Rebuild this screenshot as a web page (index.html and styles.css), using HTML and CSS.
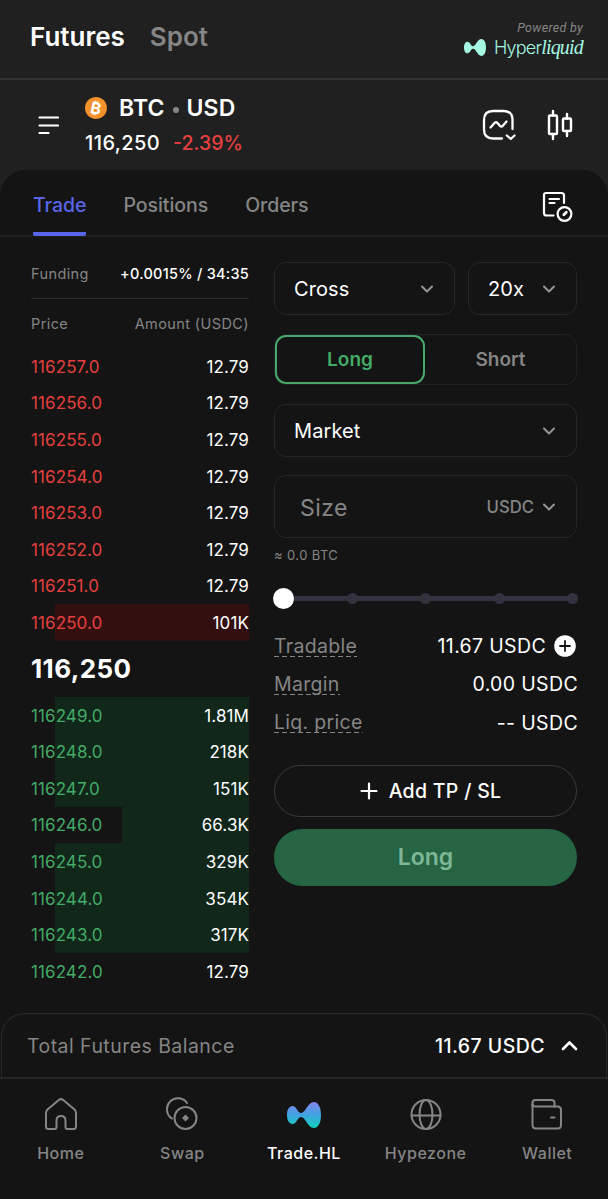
FILE: index.html
```html
<!DOCTYPE html>
<html lang="en">
<head>
    <meta charset="UTF-8">
    <meta name="viewport" content="width=device-width, initial-scale=1.0">
    <title>Futures - BTC / USD</title>
    <link rel="stylesheet" href="styles.css">
</head>
<body>
    <header class="top-bar">
        <div class="market-tabs">
            <a class="active">Futures</a>
            <a>Spot</a>
        </div>
        <div class="powered">
            <span class="powered-text">Powered by</span>
            <div class="brand">
                <svg class="brand-icon" width="22" height="17" viewBox="0 0 34 26"><path d="M0 13C0 7.500 2.200 4 5.500 4C9.800 4 10 10.500 14 11C18.500 11.300 20.500 0 27 0C31.300 0 34 5.500 34 13C34 20.500 31.300 26 27 26C20.500 26 18.500 14.700 14 15C10 15.500 9.800 22 5.500 22C2.200 22 0 18.500 0 13Z" fill="#a5f8e2"/></svg>
                <span class="brand-name">Hyper<i>liquid</i></span>
            </div>
        </div>
    </header>

    <section class="pair-bar">
        <svg class="menu-icon" width="22" height="20" viewBox="0 0 22 20"><path d="M2.500 2.500H21M2.500 10.500H21M2.500 18H11.500" fill="none" stroke="#fff" stroke-width="2.200" stroke-linecap="round"/></svg>
        <div class="pair-info">
            <div class="pair-name">
                <span class="btc-icon">₿</span>
                <span>BTC</span>
                <span class="dot"></span>
                <span>USD</span>
            </div>
            <div class="pair-price">
                <span>116,250</span>
                <span class="change">-2.39%</span>
            </div>
        </div>
        <div class="pair-actions">
            <svg width="34" height="32" viewBox="0 0 34 32" fill="none" stroke="#fff" stroke-width="2.300" stroke-linecap="round" stroke-linejoin="round"><path d="M20 29.500H11Q2 29.500 2 20.500V11Q2 2 11 2H21.500Q30.500 2 30.500 11V20"/><path d="M8.500 18.500L12.500 14Q14 12.500 15.500 14L18 17Q19.500 18.500 20.800 16.800L24.500 12.500"/><path d="M24.800 26.500L28.800 30L32.500 26.500"/></svg>
            <svg width="26" height="32" viewBox="0 0 26 32" fill="none" stroke="#fff" stroke-width="2.400" stroke-linecap="round"><rect x="2" y="6.500" width="8" height="18.500" rx="1"/><path d="M6 2V6.500M6 25V30M20 5V9.500M20 22V27"/><rect x="16" y="9.500" width="8" height="12.500" rx="1"/></svg>
        </div>
    </section>

    <main class="panel">
        <nav class="panel-tabs">
            <a class="active">Trade</a>
            <a>Positions</a>
            <a>Orders</a>
            <svg class="history-icon" width="32" height="32" viewBox="0 0 32 32" fill="none" stroke="#fff" stroke-width="2.200" stroke-linecap="round"><path d="M12.500 24.500H5.500Q3 24.500 3 22V4Q3 2 5 2H20.500Q23 2 23 4.500V12"/><path d="M8.500 8H18M8.500 12H13.500"/><circle cx="23.500" cy="23" r="6.900"/><path d="M22.800 23.700L25.300 21.200" stroke-width="2.800"/></svg>
        </nav>

        <div class="trade">
            <section class="book">
                <div class="funding">
                    <span>Funding</span>
                    <span class="funding-value">+0.0015% / 34:35</span>
                </div>
                <div class="book-head">
                    <span>Price</span>
                    <span>Amount (USDC)</span>
                </div>
                <div class="rows asks">
                    <div class="row"><span>116257.0</span><b>12.79</b></div>
                    <div class="row"><span>116256.0</span><b>12.79</b></div>
                    <div class="row"><span>116255.0</span><b>12.79</b></div>
                    <div class="row"><span>116254.0</span><b>12.79</b></div>
                    <div class="row"><span>116253.0</span><b>12.79</b></div>
                    <div class="row"><span>116252.0</span><b>12.79</b></div>
                    <div class="row"><span>116251.0</span><b>12.79</b></div>
                    <div class="row" style="--depth: 89.2%"><span>116250.0</span><b>101K</b></div>
                </div>
                <div class="last-price">116,250</div>
                <div class="rows bids">
                    <div class="row" style="--depth: 89.2%"><span>116249.0</span><b>1.81M</b></div>
                    <div class="row" style="--depth: 89.2%"><span>116248.0</span><b>218K</b></div>
                    <div class="row" style="--depth: 89.2%"><span>116247.0</span><b>151K</b></div>
                    <div class="row" style="--depth: 58.3%"><span>116246.0</span><b>66.3K</b></div>
                    <div class="row" style="--depth: 89.2%"><span>116245.0</span><b>329K</b></div>
                    <div class="row" style="--depth: 89.2%"><span>116244.0</span><b>354K</b></div>
                    <div class="row" style="--depth: 89.2%"><span>116243.0</span><b>317K</b></div>
                    <div class="row"><span>116242.0</span><b>12.79</b></div>
                </div>
            </section>

            <section class="order-form">
                <div class="selects">
                    <div class="select mode"><span>Cross</span><svg class="chevron" viewBox="0 0 14 8"><path d="M2 1.500L7 6.500L12 1.500"/></svg></div>
                    <div class="select leverage"><span>20x</span><svg class="chevron" viewBox="0 0 14 8"><path d="M2 1.500L7 6.500L12 1.500"/></svg></div>
                </div>
                <div class="side-toggle">
                    <div class="side active">Long</div>
                    <div class="side">Short</div>
                </div>
                <div class="select type"><span>Market</span><svg class="chevron" viewBox="0 0 14 8"><path d="M2 1.500L7 6.500L12 1.500"/></svg></div>
                <div class="size-box">
                    <span class="size-label">Size</span>
                    <span class="size-unit">USDC</span>
                    <svg class="chevron" viewBox="0 0 14 8"><path d="M2 1.500L7 6.500L12 1.500"/></svg>
                </div>
                <div class="approx">≈ 0.0 BTC</div>
                <div class="slider">
                    <span class="thumb"></span>
                    <span class="stop"></span>
                    <span class="stop"></span>
                    <span class="stop"></span>
                    <span class="stop"></span>
                </div>
                <div class="details">
                    <div class="detail">
                        <span class="detail-label">Tradable</span>
                        <span class="detail-value">11.67 USDC</span>
                        <svg class="plus-circle" width="22" height="22" viewBox="0 0 22 22"><circle cx="11" cy="11" r="10.800" fill="#fff"/><path d="M6 11H16M11 6V16" stroke="#141414" stroke-width="1.800" stroke-linecap="round"/></svg>
                    </div>
                    <div class="detail">
                        <span class="detail-label">Margin</span>
                        <span class="detail-value">0.00 USDC</span>
                    </div>
                    <div class="detail">
                        <span class="detail-label">Liq. price</span>
                        <span class="detail-value">-- USDC</span>
                    </div>
                </div>
                <div class="add-btn">
                    <svg width="18" height="18" viewBox="0 0 18 18"><path d="M1.500 9H16.500M9 1.500V16.500" stroke="#fff" stroke-width="2.200" stroke-linecap="round"/></svg>
                    <span>Add TP / SL</span>
                </div>
                <div class="submit-btn">Long</div>
            </section>
        </div>
    </main>

    <section class="balance">
        <span class="balance-label">Total Futures Balance</span>
        <span class="balance-value">11.67 USDC</span>
        <svg width="17" height="11" viewBox="0 0 17 11"><path d="M2 9L8.500 2.500L15 9" fill="none" stroke="#fff" stroke-width="2.600" stroke-linecap="round" stroke-linejoin="round"/></svg>
    </section>

    <footer class="bottom-nav">
        <a>
            <svg width="34" height="34" viewBox="0 0 34 34"><path d="M3.500 12.500L14.800 3Q17 1.200 19.200 3L30.500 12.500Q32 14 32 16V29.500Q32 32 29.500 32H23.500Q21.500 32 21.500 30V23.500Q21.500 19 17 19Q12.500 19 12.500 23.500V30Q12.500 32 10.500 32H4.500Q2 32 2 29.500V16Q2 14 3.500 12.500Z"/></svg>
            <span>Home</span>
        </a>
        <a>
            <svg width="34" height="34" viewBox="0 0 34 34"><path d="M22 6A11 11 0 1 0 7 21.500"/><circle cx="20.500" cy="21" r="11"/><path d="M20.500 17.500L24 21L20.500 24.500L17 21Z" fill="#858585" stroke="none"/></svg>
            <span>Swap</span>
        </a>
        <a class="active">
            <svg width="34" height="34" viewBox="0 0 34 34">
                <defs>
                    <linearGradient id="hl" x1="0" y1="0" x2="0" y2="1">
                        <stop offset="0" stop-color="#8584f0"/>
                        <stop offset="0.5" stop-color="#3fa2e0"/>
                        <stop offset="1" stop-color="#10d4bb"/>
                    </linearGradient>
                </defs>
                <path transform="translate(0 5)" d="M0 13C0 7.500 2.200 4 5.500 4C9.800 4 10 10.500 14 11C18.500 11.300 20.500 0 27 0C31.300 0 34 5.500 34 13C34 20.500 31.300 26 27 26C20.500 26 18.500 14.700 14 15C10 15.500 9.800 22 5.500 22C2.200 22 0 18.500 0 13Z" fill="url(#hl)" stroke="none"/>
            </svg>
            <span>Trade.HL</span>
        </a>
        <a>
            <svg width="34" height="34" viewBox="0 0 34 34"><circle cx="17" cy="17.500" r="14.500"/><ellipse cx="17" cy="17.500" rx="6.500" ry="14.500"/><path d="M2.500 18.500H31.500"/></svg>
            <span>Hypezone</span>
        </a>
        <a>
            <svg width="34" height="34" viewBox="0 0 34 34"><path d="M2.500 9.500V6Q2.500 3 5.500 3H21.500Q24.500 3 24.500 6V9.500"/><path d="M2.500 7V28Q2.500 31.500 6 31.500H27.500Q31 31.500 31 28V13Q31 9.500 27.500 9.500H5.500Q2.500 9.500 2.500 7M21 20.500H24.500"/></svg>
            <span>Wallet</span>
        </a>
    </footer>
</body>
</html>
```
FILE: styles.css
```css
* {
    box-sizing: border-box;
}

body {
    margin: 0;
    width: 608px;
    height: 1199px;
    overflow: hidden;
    display: flex;
    flex-direction: column;
    background-color: #202020;
    color: #fff;
    font-family: Inter, "Liberation Sans", sans-serif;
}

svg {
    display: block;
    flex-shrink: 0;
}

/* Header */
.top-bar {
    height: 80px;
    padding: 0 25px 6px 30px;
    display: flex;
    justify-content: space-between;
    align-items: center;
    border-bottom: 2px solid #333;
}

.market-tabs {
    display: flex;
    gap: 25px;
    font-size: 26px;
    font-weight: 600;
    color: #858585;
}

.market-tabs .active {
    color: #fff;
}

.powered {
    padding-top: 7px;
    display: flex;
    flex-direction: column;
    align-items: flex-end;
}

.powered-text {
    font-family: Roboto, sans-serif;
    font-size: 12.5px;
    line-height: 16px;
    font-style: italic;
    letter-spacing: 0.3px;
    color: #858585;
}

.brand {
    display: flex;
    align-items: center;
    gap: 8px;
    color: #a5f8e2;
}

.brand-name {
    font-size: 18px;
    line-height: 22px;
    font-weight: 300;
    letter-spacing: -0.8px;
}

.brand-name i {
    font-family: "Liberation Serif", serif;
    font-size: 20px;
    font-weight: 400;
}

/* Pair */
.pair-bar {
    height: 90px;
    padding: 0 35px 0 37px;
    display: flex;
    align-items: center;
}

.pair-info {
    flex: 1;
    margin-left: 26px;
}

.pair-name {
    display: flex;
    align-items: center;
    height: 34px;
    font-size: 23px;
    font-weight: 600;
    letter-spacing: 0.1px;
}

.btc-icon {
    width: 22px;
    height: 22px;
    margin-right: 12px;
    border-radius: 50%;
    background-color: #f3922b;
    font-size: 16px;
    font-weight: 700;
    line-height: 22px;
    text-align: center;
    transform: rotate(12deg);
}

.dot {
    width: 6px;
    height: 6px;
    margin: 4px 8px 0;
    border-radius: 50%;
    background-color: #858585;
}

.pair-price {
    display: flex;
    gap: 13px;
    height: 34px;
    line-height: 36px;
    font-size: 20px;
    font-weight: 500;
    letter-spacing: 0.4px;
}

.change {
    font-size: 19.5px;
    color: #e5403f;
    letter-spacing: 0;
}

.pair-actions {
    display: flex;
    gap: 31px;
}

/* Trade panel */
.panel {
    height: 843px;
    background-color: #141414;
    border-radius: 26px 26px 0 0;
}

.panel-tabs {
    height: 67px;
    padding: 0 35px 0 33px;
    display: flex;
    align-items: center;
    gap: 37px;
    border-bottom: 2px solid #1f1f1f;
    font-size: 19.5px;
    font-weight: 500;
    letter-spacing: -0.05px;
    color: #858585;
}

.panel-tabs a {
    height: 66px;
    padding-top: 4px;
    line-height: 62px;
}

.panel-tabs .active {
    color: #5865e8;
    background: linear-gradient(#5865e8, #5865e8) bottom / 100% 4px no-repeat;
    border-radius: 2px;
}

.history-icon {
    margin: 8px 0 0 auto;
}

.trade {
    display: flex;
    gap: 25px;
    padding: 25px 31px 0;
}

/* Order book */
.book {
    width: 218px;
}

.funding,
.book-head,
.row {
    display: flex;
    justify-content: space-between;
    align-items: center;
}

.funding {
    height: 37px;
    padding-bottom: 13px;
    border-bottom: 1px solid #2a2a2a;
    font-size: 14.5px;
    letter-spacing: 0.4px;
    color: #858585;
}

.funding-value {
    color: #fff;
    font-weight: 450;
    letter-spacing: 0.25px;
}

.book-head {
    height: 49px;
    padding-bottom: 1px;
    font-size: 14.5px;
    letter-spacing: 0.4px;
    color: #858585;
}

.row {
    height: 36.6px;
    padding-top: 1px;
    font-size: 17px;
    letter-spacing: 0.1px;
    background: linear-gradient(var(--fill), var(--fill)) right / var(--depth, 0%) 100% no-repeat;
}

.row b {
    font-weight: 400;
    color: #fff;
}

.asks {
    --fill: #330f10;
    color: #e5403f;
}

.bids {
    --fill: #10271a;
    color: #43ab67;
}

.last-price {
    height: 56px;
    line-height: 56px;
    font-size: 26px;
    font-weight: 700;
    letter-spacing: 0.4px;
}

/* Order form */
.order-form {
    width: 303px;
}

.selects {
    display: flex;
    gap: 13px;
}

.select {
    height: 53px;
    padding: 0 20px 0 19px;
    display: flex;
    justify-content: space-between;
    align-items: center;
    border: 1px solid #262626;
    border-radius: 12px;
    font-size: 20px;
    letter-spacing: 0.1px;
}

.mode {
    width: 181px;
}

.leverage {
    width: 109px;
}

.chevron {
    width: 14px;
    height: 8px;
    fill: none;
    stroke: #959595;
    stroke-width: 2;
    stroke-linecap: round;
    stroke-linejoin: round;
}

.side-toggle {
    height: 51px;
    margin-top: 19px;
    display: flex;
    border: 1px solid #232323;
    border-radius: 12px;
}

.side {
    flex: 1;
    display: flex;
    justify-content: center;
    align-items: center;
    padding-bottom: 1px;
    font-size: 19px;
    font-weight: 600;
    color: #858585;
}

.side.active {
    flex: 0 0 150px;
    color: #43ab67;
    border: 2px solid #48a76b;
    border-radius: 11px;
}

.type {
    margin-top: 19px;
}

.size-box {
    height: 63px;
    margin-top: 18px;
    padding: 0 20px 0 25px;
    display: flex;
    align-items: center;
    border: 1px solid #262626;
    border-radius: 12px;
    color: #858585;
}

.size-label {
    flex: 1;
    padding-top: 2px;
    font-size: 23px;
    letter-spacing: 0.4px;
}

.size-unit {
    margin-right: 8px;
    font-size: 16.7px;
    font-weight: 500;
}

.approx {
    height: 34px;
    line-height: 34px;
    font-size: 13px;
    letter-spacing: 0.4px;
    color: #858585;
}

.slider {
    height: 22px;
    margin: 15px -1px 0 -1px;
    display: flex;
    justify-content: space-between;
    align-items: center;
    background: linear-gradient(#34323f, #34323f) center / 290px 5px no-repeat;
}

.thumb {
    width: 21px;
    height: 21px;
    margin-right: -10px;
    border-radius: 50%;
    background-color: #fff;
}

.stop {
    width: 11px;
    height: 11px;
    border-radius: 50%;
    background-color: #34323f;
}

.details {
    margin-top: 18px;
}

.detail {
    height: 38.3px;
    display: flex;
    align-items: center;
    font-size: 19.5px;
    letter-spacing: 0.3px;
}

.detail-label {
    line-height: 21px;
    color: #858585;
    background: repeating-linear-gradient(to right, #858585 0 5px, transparent 5px 8px) bottom / 100% 1px no-repeat;
}

.detail-value {
    margin-left: auto;
    margin-right: -1px;
    letter-spacing: 0.35px;
}

.plus-circle {
    margin: 0 1px 0 9px;
}

.add-btn {
    height: 52px;
    margin-top: 23px;
    padding-left: 10px;
    display: flex;
    justify-content: center;
    align-items: center;
    gap: 11px;
    border: 1px solid #3a3a3a;
    border-radius: 26px;
    font-size: 19.5px;
    font-weight: 500;
    letter-spacing: 0.3px;
}

.submit-btn {
    height: 57px;
    margin-top: 12px;
    line-height: 56px;
    text-align: center;
    border-radius: 29px;
    background-color: #266543;
    color: #7eb797;
    font-size: 23px;
    font-weight: 600;
}

/* Balance */
.balance {
    height: 64px;
    margin: 0 1px;
    padding: 0 28px 0 25px;
    display: flex;
    align-items: center;
    background-color: #141414;
    border: 1px solid #292929;
    border-bottom: 0;
    border-radius: 24px 24px 0 0;
    box-shadow: 0 0 0 26px #141414;
    font-size: 19.5px;
    letter-spacing: 0.45px;
}

.balance-label {
    flex: 1;
    color: #858585;
}

.balance-value {
    margin-right: 16px;
    font-weight: 500;
}

/* Bottom nav */
.bottom-nav {
    flex: 1;
    padding-top: 18px;
    display: grid;
    grid-template-columns: repeat(5, 1fr);
    background-color: #141414;
    border-top: 2px solid #252525;
    z-index: 1;
}

.bottom-nav a {
    display: flex;
    flex-direction: column;
    align-items: center;
    gap: 12px;
    font-size: 16px;
    font-weight: 500;
    letter-spacing: 0.5px;
    color: #858585;
}

.bottom-nav svg {
    fill: none;
    stroke: #858585;
    stroke-width: 2;
    stroke-linecap: round;
    stroke-linejoin: round;
}

.bottom-nav .active {
    color: #fff;
}
```
